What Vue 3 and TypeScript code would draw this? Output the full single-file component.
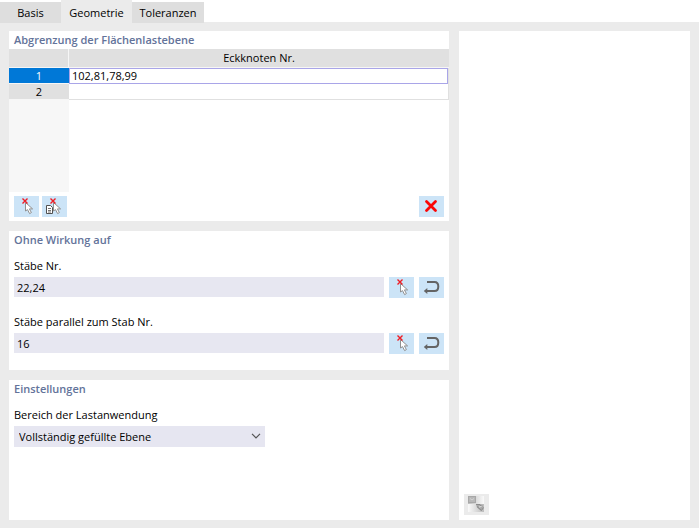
<script setup lang="ts">
import { ref } from 'vue'

const tabs = ['Basis', 'Geometrie', 'Toleranzen']
const activeTab = ref('Geometrie')
const rows = ref([{ nodes: '102,81,78,99' }, { nodes: '' }])
const selectedRow = ref(0)
const members = ref([
  { id: 'members', label: 'Stäbe Nr.', value: '22,24' },
  { id: 'parallel', label: 'Stäbe parallel zum Stab Nr.', value: '16' },
])
const area = ref('Vollständig gefüllte Ebene')

function clearRow() {
  rows.value[selectedRow.value].nodes = ''
}
</script>

<template>
  <div class="dialog">
    <nav class="tabs" role="tablist">
      <button
        v-for="tab in tabs"
        :key="tab"
        class="tab"
        :class="{ active: tab === activeTab }"
        role="tab"
        :aria-selected="tab === activeTab"
        @click="activeTab = tab"
      >{{ tab }}</button>
    </nav>

    <!-- Shared icon shapes -->
    <svg class="defs" width="0" height="0" aria-hidden="true">
      <symbol id="pick" viewBox="0 0 25 21">
        <path d="M11.5 6.5V15L13.5 13.6L15.6 17.6L17.4 16.6L15.4 12.9H18.6Z" fill="#fff" stroke="#909090" stroke-width="1" />
        <path d="M8.5 2.5L13.5 7.5M13.5 2.5L8.5 7.5" stroke="#ef1c24" stroke-width="1.4" />
      </symbol>
      <symbol id="undo" viewBox="0 0 25 21">
        <path d="M8 5H15.5C18 5 19.3 7 19.3 9.5S18 14 15.5 14H7" fill="none" stroke="#646464" stroke-width="2" />
        <path d="M4.8 14L8.3 11V17Z" fill="#646464" />
      </symbol>
    </svg>

    <main class="body">
      <div class="left">
        <section class="panel first">
          <h2>Abgrenzung der Flächenlastebene</h2>
          <div class="grid-area">
            <table>
              <thead>
                <tr><th class="num"></th><th>Eckknoten Nr.</th></tr>
              </thead>
              <tbody>
                <tr v-for="(row, i) in rows" :key="i" :class="{ selected: i === selectedRow }">
                  <th class="num" scope="row">{{ i + 1 }}</th>
                  <td>
                    <input v-model="row.nodes" type="text" :aria-label="`Eckknoten Nr. ${i + 1}`" @focus="selectedRow = i" />
                  </td>
                </tr>
              </tbody>
            </table>
            <div class="gutter"></div>
          </div>
          <div class="tools">
            <button class="icon" aria-label="Knoten wählen">
              <svg viewBox="0 0 25 21"><use href="#pick" /></svg>
            </button>
            <button class="icon" aria-label="Knoten aus Liste wählen">
              <svg viewBox="0 0 25 21">
                <use href="#pick" />
                <path d="M4.5 9.5H8.5L10.5 11.5V17.5H4.5Z" fill="#fff" stroke="#505050" />
                <path d="M6 12.5H9M6 14.5H9M6 16H9" stroke="#505050" stroke-width=".8" />
              </svg>
            </button>
            <button class="icon end" aria-label="Löschen" @click="clearRow">
              <svg viewBox="0 0 25 21">
                <path d="M7.5 5.5L16.5 14.5M16.5 5.5L7.5 14.5" stroke="#fb0505" stroke-width="2.8" stroke-linecap="round" />
              </svg>
            </button>
          </div>
        </section>

        <section class="panel second">
          <h2>Ohne Wirkung auf</h2>
          <div v-for="m in members" :key="m.id" class="field">
            <label :for="m.id">{{ m.label }}</label>
            <div class="line">
              <input :id="m.id" v-model="m.value" type="text" />
              <button class="icon" :aria-label="`${m.label} wählen`">
                <svg viewBox="0 0 25 21"><use href="#pick" /></svg>
              </button>
              <button class="icon" :aria-label="`${m.label} umkehren`">
                <svg viewBox="0 0 25 21"><use href="#undo" /></svg>
              </button>
            </div>
          </div>
        </section>

        <section class="panel third">
          <h2>Einstellungen</h2>
          <div class="field">
            <label for="area">Bereich der Lastanwendung</label>
            <div class="select">
              <select id="area" v-model="area">
                <option>Vollständig gefüllte Ebene</option>
              </select>
              <svg class="chevron" viewBox="0 0 10 6" aria-hidden="true">
                <path d="M1 .8L5 4.8L9 .8" fill="none" stroke="#555" stroke-width="1.2" />
              </svg>
            </div>
          </div>
        </section>
      </div>

      <section class="panel preview" aria-label="Vorschau">
        <button class="icon muted" aria-label="Ansicht">
          <svg viewBox="0 0 25 21">
            <defs>
              <linearGradient id="fade">
                <stop offset="0" stop-color="#bcbcbc" />
                <stop offset="1" stop-color="#fafafa" />
              </linearGradient>
              <linearGradient id="fade-low">
                <stop offset="0" stop-color="#fafafa" />
                <stop offset="1" stop-color="#bcbcbc" />
              </linearGradient>
            </defs>
            <rect x="4" y="2" width="16" height="8" fill="url(#fade)" />
            <rect x="4" y="10" width="16" height="8" fill="url(#fade-low)" />
            <rect x="4.5" y="2.5" width="7" height="6" fill="#b8b8b8" stroke="#a8a8a8" />
            <path d="M6 4.5L8 6L10 4.5" fill="none" stroke="#d4d4d4" />
            <path d="M12 10.5H18.5L19.5 14L17 17L13 13.5Z" fill="#a9a9a9" />
            <path d="M12 10.5H16L17 12M13 12.5L17.5 16.5L19.5 13.5" fill="none" stroke="#8b8b8b" />
            <path d="M15 13L17.5 12.5" stroke="#e2e2e2" />
          </svg>
        </button>
      </section>
    </main>
  </div>
</template>

<style>
body {
  background: #fff;
}
</style>

<style scoped>
.dialog,
.dialog * {
  box-sizing: border-box;
}
.dialog {
  display: flex;
  flex-direction: column;
  min-height: 100vh;
  font: 11px/16px "Open Sans", "Noto Sans", sans-serif;
  color: #000;
}
button,
input,
select {
  font: inherit;
  color: inherit;
  border: 0;
  border-radius: 0;
  margin: 0;
  padding: 0;
  outline: 0;
}
.defs {
  position: absolute;
}
.tabs {
  position: relative;
  display: flex;
  align-items: flex-end;
  height: 23px;
  margin-bottom: -1px;
}
.tab {
  height: 21px;
  padding: 0 6px;
  min-width: 61px;
  background: #dedede;
}
.tab + .tab {
  min-width: 71px;
}
.tab:last-child {
  min-width: 72px;
}
.tab.active {
  height: 23px;
  padding-top: 2px;
  background: #ebebeb;
}
.body {
  flex: 1;
  display: grid;
  grid-template-columns: 440fr 231fr;
  gap: 10px;
  padding: 9px 9px 8px;
  background: #ebebeb;
}
.left {
  display: flex;
  flex-direction: column;
  gap: 10px;
}
.panel {
  background: #fff;
}
h2 {
  margin: 0;
  padding: 0 5px;
  font-size: 11px;
  line-height: 18px;
  font-weight: 600;
  color: #63739a;
}
.grid-area {
  display: flex;
  flex-direction: column;
  height: 143px;
}
table {
  width: 100%;
  border-collapse: separate;
  border-spacing: 0;
  table-layout: fixed;
}
th,
td {
  padding: 0;
  font-weight: 400;
  text-align: center;
}
thead th {
  height: 19px;
  background: #e0e0e0;
  border-bottom: 1px solid #f6f6f6;
}
thead th.num {
  border-right: 1px solid #f6f6f6;
}
.num {
  width: 60px;
}
tbody th {
  height: 16px;
  line-height: 15px;
  background: #e0e0e0;
  border-bottom: 1px solid #f6f6f6;
}
td {
  height: 16px;
  border-right: 1px solid #e0e0e0;
  border-bottom: 1px solid #e0e0e0;
}
td input {
  display: block;
  width: 100%;
  height: 15px;
  padding: 0 3px;
  background: #fff;
}
.selected th {
  background: #0078d7;
  color: #fff;
}
.selected td {
  border-bottom: 0;
}
.selected td input {
  height: 16px;
  padding: 0 2px;
  border: 1px solid #a9a5e8;
}
.gutter {
  flex: 1;
  width: 60px;
  background: #f7f7f7;
}
.tools {
  display: flex;
  gap: 3px;
  padding: 4px 5px;
}
.icon {
  flex: none;
  width: 25px;
  height: 21px;
  background: #cce4f7;
}
.icon svg {
  display: block;
  width: 25px;
  height: 21px;
}
.end {
  margin-left: auto;
}
.second {
  padding-bottom: 16px;
}
.field {
  padding: 9px 5px 0;
}
.field + .field {
  padding-top: 16px;
}
label {
  display: block;
  height: 19px;
}
.line {
  display: flex;
  align-items: flex-start;
  gap: 5px;
}
.line input {
  flex: 1;
  min-width: 0;
  height: 20px;
  padding: 1px 3px 0;
  background: #e7e7f1;
}
.third {
  flex: 1;
}
.select {
  position: relative;
  width: 251px;
  max-width: 100%;
}
select {
  display: block;
  width: 100%;
  height: 21px;
  padding: 0 24px 0 5px;
  appearance: none;
  background: #e6e6f1;
}
.chevron {
  position: absolute;
  right: 4px;
  top: 7px;
  width: 10px;
  height: 6px;
}
.preview {
  display: flex;
  align-items: flex-end;
  padding: 5px;
}
.muted {
  background: #ebebeb;
}
</style>
